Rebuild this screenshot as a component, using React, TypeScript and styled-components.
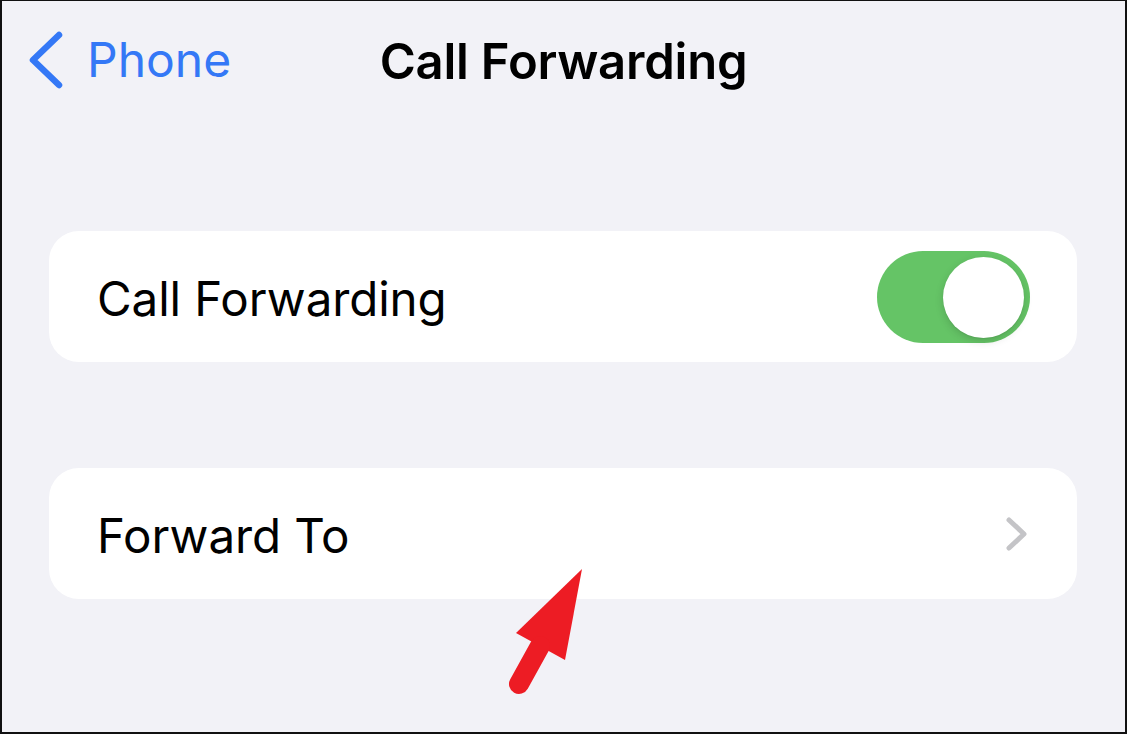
import React from "react";
import styled, { createGlobalStyle } from "styled-components";

const GlobalStyle = createGlobalStyle`
  * { box-sizing: border-box; }
  html, body { margin: 0; padding: 0; }
  body {
    font-family: Inter, "Noto Sans", "Liberation Sans", sans-serif;
    -webkit-font-smoothing: antialiased;
  }
`;

const Frame = styled.div`
  position: relative;
  width: 1127px;
  height: 734px;
  background: #f2f2f7;
  border-style: solid;
  border-color: #111;
  border-width: 1px 2px 2px 2px;
  overflow: hidden;
`;

const NavBar = styled.div`
  display: grid;
  grid-template-columns: 1fr auto 1fr;
  align-items: center;
  height: 120px;
  padding: 0 26px;
`;

const BackButton = styled.div`
  display: flex;
  align-items: center;
  gap: 23px;
  color: #3478f6;
  font-size: 48px;
  line-height: 1;
  margin-top: -2px;
`;

const Title = styled.div`
  font-size: 49px;
  font-weight: 600;
  line-height: 1;
  color: #000;
  letter-spacing: -0.2px;
`;

const Content = styled.div`
  display: flex;
  flex-direction: column;
  gap: 106px;
  padding: 110px 48px 0 47px;
`;

const Card = styled.div`
  display: flex;
  align-items: center;
  justify-content: space-between;
  height: 131px;
  background: #fff;
  border-radius: 30px;
  padding: 4px ${(p: { $padRight: number }) => p.$padRight}px 0 48px;
`;

const Label = styled.span`
  font-size: 47.5px;
  line-height: 1;
  color: #000;
  letter-spacing: -0.1px;
`;

const Toggle = styled.div`
  position: relative;
  width: 153px;
  height: 92px;
  border-radius: 46px;
  background: #65c466;
  margin-top: -4px;
`;

const Knob = styled.div`
  position: absolute;
  top: 6px;
  right: 6px;
  width: 81px;
  height: 81px;
  border-radius: 50%;
  background: #fff;
  box-shadow: 0 3px 8px rgba(0, 0, 0, 0.15), 0 1px 1px rgba(0, 0, 0, 0.06);
`;

const Pointer = styled.svg`
  position: absolute;
  left: 488px;
  top: 559px;
`;

const BackChevron = () => (
  <svg width="36" height="58" viewBox="0 0 36 58">
    <path
      d="M31 4 L5 29 L31 54"
      fill="none"
      stroke="#3478f6"
      strokeWidth="6.5"
      strokeLinecap="round"
      strokeLinejoin="round"
    />
  </svg>
);

const Disclosure = () => (
  <svg width="24" height="36" viewBox="0 0 24 36" style={{ marginTop: -4 }}>
    <path
      d="M4 4 L19 18 L4 32"
      fill="none"
      stroke="#c4c4c7"
      strokeWidth="5"
      strokeLinecap="round"
      strokeLinejoin="round"
    />
  </svg>
);

export default function App() {
  return (
    <>
      <GlobalStyle />
      <Frame>
        <NavBar>
          <BackButton>
            <BackChevron />
            <span>Phone</span>
          </BackButton>
          <Title>Call Forwarding</Title>
          <div />
        </NavBar>
        <Content>
          <Card $padRight={47}>
            <Label>Call Forwarding</Label>
            <Toggle>
              <Knob />
            </Toggle>
          </Card>
          <Card $padRight={48}>
            <Label>Forward To</Label>
            <Disclosure />
          </Card>
        </Content>
        <Pointer width="110" height="140" viewBox="0 0 110 140">
          <polygon points="92,9 26,73 75,100" fill="#ed1c24" />
          <line
            x1="50"
            y1="86"
            x2="29"
            y2="124"
            stroke="#ed1c24"
            strokeWidth="20"
            strokeLinecap="round"
          />
        </Pointer>
      </Frame>
    </>
  );
}
